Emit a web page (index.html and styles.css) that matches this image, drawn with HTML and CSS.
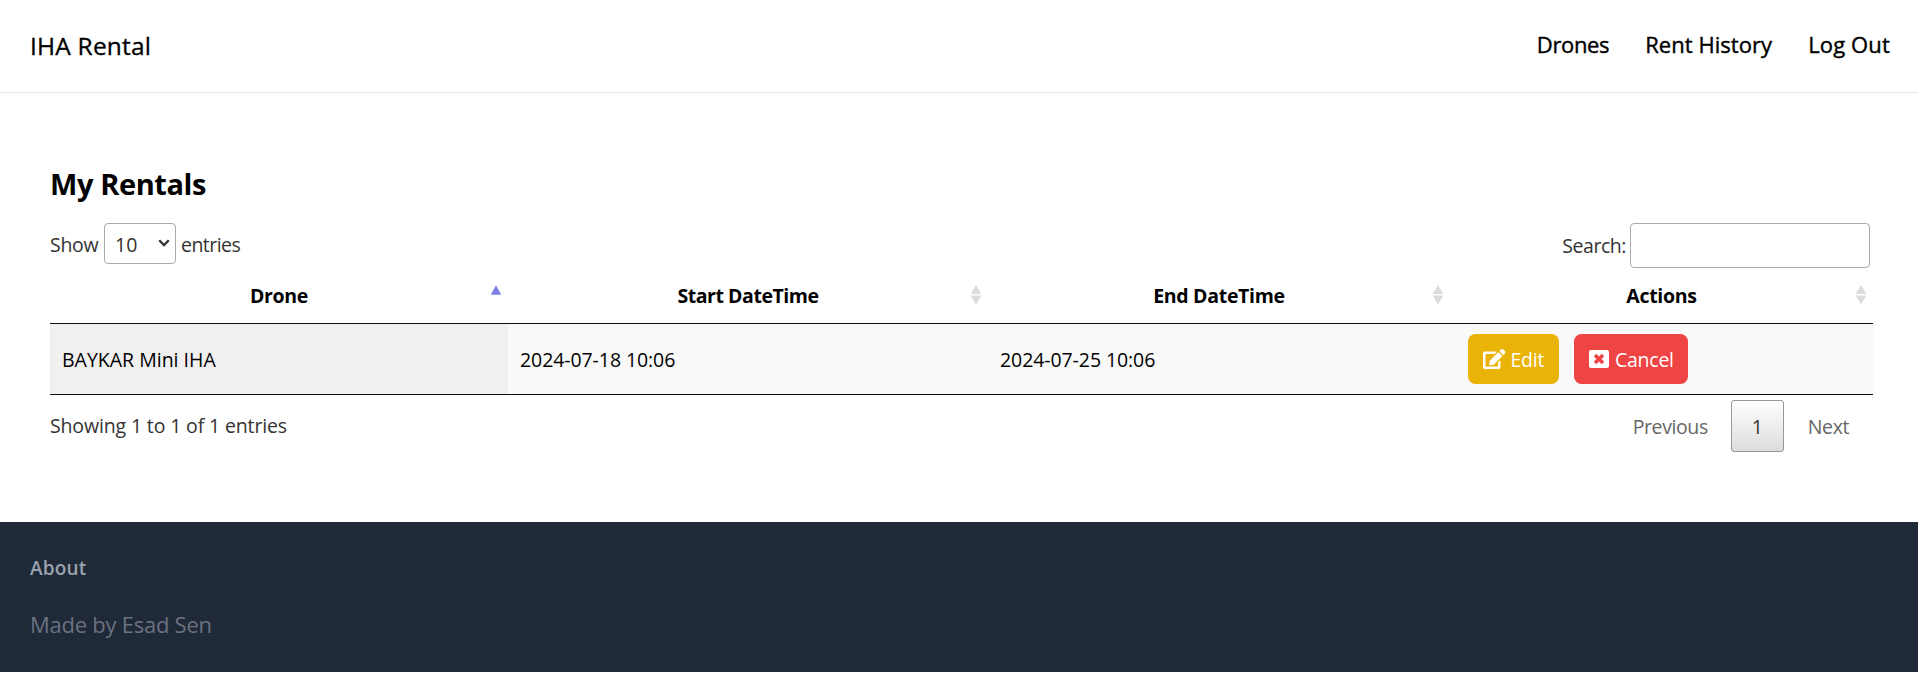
FILE: index.html
```html
<!DOCTYPE html>
<html lang="en">
<head>
<meta charset="utf-8">
<title>IHA Rental</title>
<link rel="stylesheet" href="styles.css">
</head>
<body>
<header class="navbar">
  <a class="brand">IHA Rental</a>
  <nav class="nav-links"><a class="nav-drones">Drones</a><a class="nav-history">Rent History</a><a class="nav-logout">Log Out</a></nav>
</header>
<main class="content">
  <h1 class="title"><span>My Rentals</span></h1>
  <div class="toolbar">
    <div class="length"><span class="show">Show</span>
      <div class="select"><span>10</span><svg width="12" height="8" viewBox="0 0 12 8"><path d="M1.2 1.2 6 6l4.800-4.800" fill="none" stroke="#333" stroke-width="2.300"/></svg></div>
      <span class="entries">entries</span></div>
    <label class="search"><span>Search:</span><input type="text" class="search-input"></label>
  </div>
  <div class="table">
    <div class="row head">
      <div class="th"><span class="h-drone">Drone</span><svg class="sort" width="12" height="24" viewBox="0 0 12 24"><path d="M6 .5 11.300 9.800H.7z" fill="#7b80df"/></svg></div>
      <div class="th"><span class="h-start">Start DateTime</span><svg class="sort" width="12" height="24" viewBox="0 0 12 24"><path d="M6 0 11.300 9H.7zM.7 10.500h10.600L6 19.500z" fill="#dcdcdc"/></svg></div>
      <div class="th"><span class="h-end">End DateTime</span><svg class="sort" width="12" height="24" viewBox="0 0 12 24"><path d="M6 0 11.300 9H.7zM.7 10.500h10.600L6 19.500z" fill="#dcdcdc"/></svg></div>
      <div class="th"><span class="h-actions">Actions</span><svg class="sort" width="12" height="24" viewBox="0 0 12 24"><path d="M6 0 11.300 9H.7zM.7 10.500h10.600L6 19.500z" fill="#dcdcdc"/></svg></div>
    </div>
    <div class="row body">
      <div class="td sorted"><span class="c-name">BAYKAR Mini IHA</span></div>
      <div class="td"><span class="c-date">2024-07-18 10:06</span></div>
      <div class="td"><span class="c-date">2024-07-25 10:06</span></div>
      <div class="td actions">
        <a class="btn edit"><svg width="22.500" height="20" viewBox="0 0 576 512"><path fill="#fff" d="M402.600 83.200l90.200 90.200c3.800 3.800 3.800 10 0 13.800L274.400 405.600l-92.800 10.300c-12.400 1.400-22.900-9.100-21.500-21.500l10.300-92.800L388.800 83.200c3.800-3.800 10-3.800 13.800 0zm162-22.900l-48.800-48.800c-15.200-15.200-39.900-15.200-55.200 0l-35.400 35.400c-3.800 3.800-3.800 10 0 13.800l90.200 90.200c3.800 3.800 10 3.800 13.800 0l35.400-35.400c15.200-15.300 15.200-40 0-55.200zM384 346.200V448H64V128h229.800c3.200 0 6.200-1.300 8.500-3.500l40-40c7.600-7.600 2.200-20.500-8.500-20.500H48C21.500 64 0 85.500 0 112v352c0 26.500 21.500 48 48 48h352c26.500 0 48-21.500 48-48V306.200c0-10.700-12.900-16-20.500-8.500l-40 40c-2.200 2.300-3.500 5.300-3.500 8.500z"/></svg><span>Edit</span></a>
        <a class="btn cancel"><svg width="20" height="18" viewBox="0 0 20 18"><rect width="20" height="18" rx="2" fill="#fff"/><path d="M6 5 14 13M14 5 6 13" stroke="#ef4444" stroke-width="3.600"/></svg><span>Cancel</span></a>
      </div>
    </div>
  </div>
  <div class="bottom">
    <span class="info">Showing 1 to 1 of 1 entries</span>
    <div class="pager"><a class="prev">Previous</a><a class="page">1</a><a class="next">Next</a></div>
  </div>
</main>
<footer class="footer">
  <div class="about"><span>About</span></div>
  <div class="made"><span>Made by Esad Sen</span></div>
</footer>
</body>
</html>
```
FILE: styles.css
```css
* { box-sizing: border-box; }
body { margin: 0; background: #fff; color: #000; font: 400 19.500px/30px "Open Sans", "Noto Sans", sans-serif; overflow: hidden; white-space: nowrap; }
.navbar { display: flex; justify-content: space-between; height: 93px; padding: 31px 28px 0 30px; border-bottom: 1px solid #e5e7eb; }
.brand { font-size: 24.500px; letter-spacing: .2px; -webkit-text-stroke: .3px #000; }
.nav-links { display: flex; gap: 36px; margin-top: -2px; font-size: 22px; -webkit-text-stroke: .4px #000; }
.nav-drones { letter-spacing: -.35px; }
.nav-history { letter-spacing: .05px; }
.nav-logout { letter-spacing: .15px; }
.content { height: 429px; padding: 72px 45px 0 50px; }
.title { margin: 0; height: 58px; font-size: 29px; line-height: 38px; font-weight: 700; letter-spacing: -.4px; }
.toolbar { display: flex; justify-content: space-between; height: 45px; padding-right: 3px; color: #333; }
.length { display: flex; height: 41px; align-items: center; }
.show { width: 54px; padding-top: 3px; letter-spacing: -.3px; }
.select { display: flex; align-items: center; justify-content: space-between; width: 72px; height: 41px; margin-right: 5px; padding: 0 5px 0 10px; border: 1px solid #aaa; border-radius: 4px; }
.select span { padding-top: 3px; }
.select svg { margin-top: -1px; }
.entries { padding-top: 3px; letter-spacing: -.55px; }
.search { display: flex; align-items: center; gap: 4px; letter-spacing: -.45px; }
.search-input { width: 240px; height: 45px; border: 1px solid #aaa; border-radius: 4px; background: transparent; }
.row { display: grid; grid-template-columns: 458px 480px 462px 423px; }
.head { height: 56px; border-bottom: 1px solid #111; font-weight: 700; }
.th { display: grid; grid-template-columns: 1fr 12px; padding: 13px 6px 0 18px; text-align: center; letter-spacing: -.3px; }
.h-start { letter-spacing: -.45px; }
.sort { margin-top: 4px; }
.body { height: 71px; border-bottom: 1px solid #111; background: #f9f9f9; }
.td { display: flex; align-items: center; padding-left: 12px; padding-top: 2px; }
.c-date { letter-spacing: -.08px; }
.sorted { background: #f0f0f0; }
.actions { gap: 15px; padding-top: 0; padding-left: 18px; }
.btn { display: flex; align-items: center; gap: 5px; height: 50px; padding-left: 15px; border-radius: 7.500px; color: #fff; letter-spacing: -.25px; }
.edit { width: 91px; background: #eab308; }
.cancel { width: 114px; gap: 6px; background: #ef4444; }
.btn span { padding-top: 2px; }
.bottom { display: flex; justify-content: space-between; padding-top: 5px; color: #333; }
.info { padding-top: 11px; letter-spacing: -.14px; }
.pager { display: flex; align-items: center; height: 52px; padding-right: 24px; color: #666; }
.prev, .next { padding-top: 2px; letter-spacing: -.4px; }
.page { width: 53px; height: 52px; margin: 0 24px 0 23px; border: 1px solid #979797; border-radius: 3px; background: linear-gradient(#fff, #dcdcdc); color: #333; line-height: 52px; text-align: center; }
.footer { height: 150px; padding: 31px 30px 0; background: #1f2937; }
.about { color: #9ca3af; font-size: 19px; font-weight: 600; letter-spacing: .2px; }
.made { padding-top: 26px; color: #6b7280; font-size: 22px; letter-spacing: -.25px; }
```
